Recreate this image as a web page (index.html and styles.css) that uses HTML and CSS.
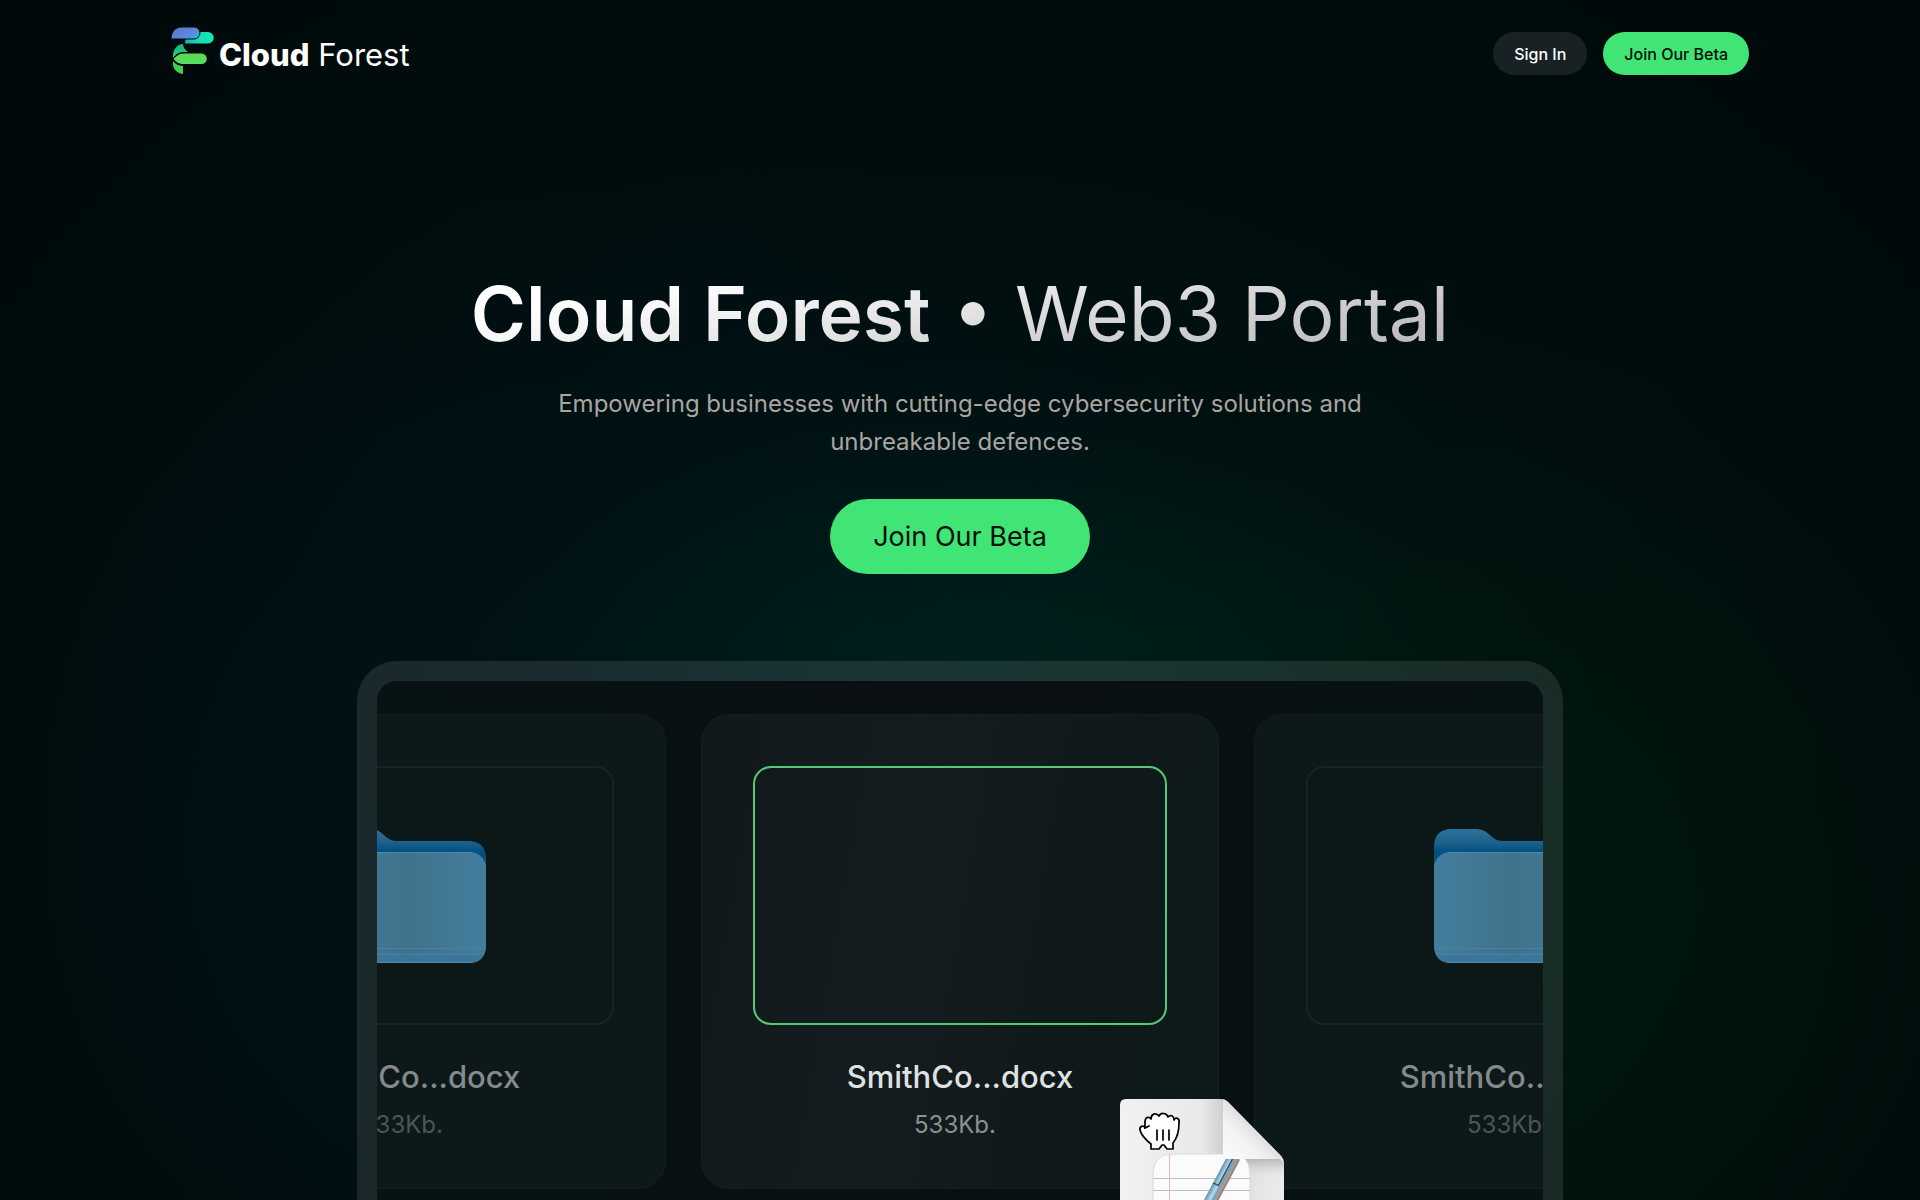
FILE: index.html
```html
<!DOCTYPE html>
<html lang="en">
<head>
<meta charset="utf-8">
<meta name="viewport" content="width=device-width, initial-scale=1">
<title>Cloud Forest</title>
<link rel="stylesheet" href="styles.css">
</head>
<body>
<div class="page">
  <header class="topbar">
    <a class="brand" href="#">
      <svg class="brand-mark" viewBox="0 0 44 48" aria-hidden="true">
        <defs>
          <linearGradient id="g-blue" x1="0" y1="0" x2="1" y2="0.6"><stop offset="0" stop-color="#5a78cc"/><stop offset="0.6" stop-color="#5f80dd"/><stop offset="1" stop-color="#4aa0dc"/></linearGradient>
          <linearGradient id="g-teal" x1="0" y1="0" x2="1" y2="0"><stop offset="0" stop-color="#18b3a6"/><stop offset="0.5" stop-color="#14dfb4"/><stop offset="1" stop-color="#14e9b4"/></linearGradient>
          <linearGradient id="g-leaf" x1="0" y1="0" x2="0" y2="1"><stop offset="0" stop-color="#10b489"/><stop offset="1" stop-color="#2ed27a"/></linearGradient>
          <linearGradient id="g-lime" x1="0" y1="0" x2="0" y2="1"><stop offset="0" stop-color="#5fd84e"/><stop offset="1" stop-color="#52e06a"/></linearGradient>
        </defs>
        <path fill="url(#g-teal)" d="M14 16.500c0-7 4-11.500 11-11.500h12a5.700 5.700 0 0 1 0 11.500z"/>
        <path fill="url(#g-blue)" stroke="#000b0c" stroke-width="1" d="M0 12C0 4 5 0 11 0h12a6 6 0 0 1 0 12z"/>
        <path fill="url(#g-leaf)" d="M2 31C1.500 23 6 17 12 17c0 3 2 6 5 8h-4c-5 0-8 2-11 6z"/>
        <path fill="url(#g-lime)" d="M2.500 32C6 28 9 26.500 13 26.500h17.500a5.300 5.300 0 0 1 0 10.600H13c-5 0-8-2-10.500-5.100z"/>
        <path fill="#46cc4e" d="M2 34c2 3 5 4.500 10 5v8C5 46 1 41 2 34z"/>
      </svg>
      <span class="brand-name"><b>Cloud</b> Forest</span>
    </a>
    <nav class="actions" aria-label="Account">
      <button class="btn btn-muted" type="button">Sign In</button>
      <button class="btn btn-accent" type="button">Join Our Beta</button>
    </nav>
  </header>

  <main class="hero">
    <h1 class="title"><strong>Cloud Forest</strong> • Web3 Portal</h1>
    <p class="lead">Empowering businesses with cutting-edge cybersecurity solutions and unbreakable defences.</p>
    <button class="btn btn-accent btn-large" type="button">Join Our Beta</button>

    <section class="frame" aria-label="File preview">
      <div class="cards">
        <article class="card card-dim">
          <div class="thumb">
            <svg class="folder" viewBox="0 0 158 134" aria-hidden="true"><use href="#folder"/></svg>
          </div>
          <h2 class="file-name">SmithCo...docx</h2>
          <p class="file-size">533Kb.</p>
        </article>

        <article class="card card-active">
          <div class="thumb"></div>
          <h2 class="file-name">SmithCo...docx</h2>
          <p class="file-size">533Kb.</p>
          <svg class="dragged" viewBox="0 0 164 214" aria-hidden="true">
            <defs>
              <linearGradient id="g-sheet" x1="0" y1="0" x2="1" y2="0"><stop offset="0" stop-color="#f1f1f1"/><stop offset="0.5" stop-color="#e9e9ea"/><stop offset="0.63" stop-color="#cfcfd0"/><stop offset="0.66" stop-color="#dcdcdd"/><stop offset="1" stop-color="#ececec"/></linearGradient>
              <linearGradient id="g-fold" x1="0" y1="1" x2="0.600" y2="0.400"><stop offset="0" stop-color="#fdfdfd"/><stop offset="0.6" stop-color="#f1f1f1"/><stop offset="1" stop-color="#d5d6d8"/></linearGradient>
              <linearGradient id="g-shade" x1="0" y1="0" x2="0" y2="1"><stop offset="0" stop-color="#9a9a9a" stop-opacity="0.600"/><stop offset="1" stop-color="#dddddd" stop-opacity="0"/></linearGradient>
              <linearGradient id="g-pen" x1="0" y1="0" x2="1" y2="0"><stop offset="0" stop-color="#5f8fb0"/><stop offset="0.4" stop-color="#b9dcf0"/><stop offset="0.62" stop-color="#6f9dbd"/><stop offset="0.78" stop-color="#b69c8c"/><stop offset="1" stop-color="#87777a"/></linearGradient>
            </defs>
            <path fill="url(#g-sheet)" d="M6 0h95q4 0 7 3l53 54q3 3 3 8v149H0V6q0-6 6-6z"/>
            <path fill="url(#g-shade)" d="M103 60h57l4 4v16h-61z"/>
            <path fill="#fbfbfb" stroke="#d9d9d9" stroke-width="1" d="M33 214V75q0-20 20-20h57q20 0 20 20v139z"/>
            <path stroke="#bdbdbd" stroke-width="1" fill="none" d="M33 79.500h97M33 91.500h97M33 103.500h97"/>
            <path stroke="#e8b9b5" stroke-width="1" d="M49.500 55v159"/>
            <g transform="translate(113 57) rotate(28)">
              <path fill="url(#g-pen)" d="M-5 0H8V140H-5z"/>
              <path fill="none" stroke="#34505f" stroke-width="1.500" d="M1 0V33H-5"/>
            </g>
            <path fill="url(#g-fold)" d="M103 0q3 1 5 3l53 54q2 2 1 3h-53q-6 0-6-6z"/>
            <g transform="translate(19 14)" stroke="#000" stroke-width="1.700" stroke-linejoin="round" stroke-linecap="round">
              <path fill="#fff" d="M12 36V31C7 27 2 21 1 17C0 13 5 12 6 15V9C6 4 10 3 12 6C12 1 17-1 20 3C22-1 28 0 29 4C32 1 35 3 35 7C37 3 41 6 40 10C40 17 39 24 34 30V36H28L25 32H23L20 36z"/>
              <path fill="none" d="M6 15L10 13M18 17V27M24 17V27M30 17V27"/>
            </g>
          </svg>
        </article>

        <article class="card card-dim">
          <div class="thumb">
            <svg class="folder" viewBox="0 0 158 134" aria-hidden="true">
              <defs>
                <linearGradient id="g-back" gradientUnits="userSpaceOnUse" x1="0" y1="0" x2="0" y2="23"><stop offset="0" stop-color="#2f729c"/><stop offset="0.5" stop-color="#20648e"/><stop offset="1" stop-color="#034f80"/></linearGradient>
                <linearGradient id="g-front" x1="0" y1="0" x2="1" y2="0"><stop offset="0" stop-color="#437e9f"/><stop offset="0.5" stop-color="#40728b"/><stop offset="1" stop-color="#437e9f"/></linearGradient>
                <g id="folder">
                  <path fill="url(#g-back)" d="M0 18Q0 0 18 0H42C56 0 56 12 69 12H140Q158 12 158 30V60H0z"/>
                  <rect fill="url(#g-front)" y="23" width="158" height="111" rx="16"/>
                  <path fill="#3b769a" d="M2 126H156Q152 134 142 134H16Q6 134 2 126z"/>
                  <path stroke="#4a819e" stroke-width="1" fill="none" d="M1 119.500H157M2 125.500H156"/>
                  <path stroke="#5189a8" stroke-width="1" fill="none" d="M14 133.500H144M14 23.500H144"/>
                </g>
              </defs>
              <use href="#folder"/>
            </svg>
          </div>
          <h2 class="file-name">SmithCo...docx</h2>
          <p class="file-size">533Kb.</p>
        </article>
      </div>
    </section>
  </main>
</div>
</body>
</html>
```
FILE: styles.css
```css
* {
  box-sizing: border-box;
}

body {
  margin: 0;
  background: #000a0b;
  color: #fff;
  font-family: Inter, "Liberation Sans", sans-serif;
}

h1, h2, p {
  margin: 0;
}

.page {
  display: flex;
  flex-direction: column;
  height: 100vh;
  overflow: hidden;
  background:
    radial-gradient(ellipse 26% 24% at 51% 57%, rgba(0, 48, 40, 0.4), transparent),
    radial-gradient(ellipse 34% 50% at 74% 76%, rgba(0, 36, 16, 0.5), transparent),
    radial-gradient(ellipse 40% 60% at 32% 70%, rgba(0, 24, 34, 0.5), transparent),
    radial-gradient(ellipse 60% 80% at 50% 65%, rgba(0, 26, 26, 0.6), transparent),
    #000a0b;
}

.topbar {
  display: flex;
  align-items: flex-end;
  justify-content: space-between;
  width: 100%;
  max-width: 1626px;
  margin: 0 auto;
  padding: 27px 24px 0;
}

.brand {
  display: flex;
  align-items: center;
  gap: 4px;
  color: #fff;
  text-decoration: none;
}

.brand-mark {
  width: 44px;
  height: 48px;
}

.brand-name {
  padding-top: 8px;
  font-size: 31px;
  line-height: 36px;
}

.brand-name b {
  font-weight: 800;
}

.actions {
  display: flex;
  gap: 16px;
}

.btn {
  height: 43px;
  padding: 0 21px;
  border: 0;
  border-radius: 40px;
  font: 500 16px/20px Inter, "Liberation Sans", sans-serif;
  white-space: nowrap;
  cursor: pointer;
}

.btn-muted {
  background: #182224;
  color: #fff;
}

.btn-accent {
  background: #41e575;
  color: #000f0a;
}

.btn-large {
  height: 75px;
  padding: 0 43px;
  font-size: 27px;
  font-weight: 400;
  line-height: 32px;
}

.hero {
  display: flex;
  flex: 1;
  flex-direction: column;
  align-items: center;
  min-height: 0;
  padding: 193px 24px 0;
}

.title {
  background: linear-gradient(170deg, #fff 20%, #b4b2b2 100%);
  background-clip: text;
  color: transparent;
  font-size: 75px;
  font-weight: 400;
  line-height: 92px;
  text-align: center;
}

.title strong {
  font-weight: 600;
}

.lead {
  max-width: 840px;
  margin-top: 25px;
  color: #aaa5a0;
  font-size: 24px;
  line-height: 38px;
  text-align: center;
}

.hero .btn-large {
  flex: none;
  margin-top: 38px;
}

.frame {
  flex: 1;
  width: 100%;
  max-width: 1206px;
  min-height: 0;
  margin-top: 87px;
  border: 20px solid rgba(255, 255, 255, 0.1);
  border-bottom: 0;
  border-radius: 40px 40px 0 0;
  background: linear-gradient(90deg, #071212, #0a0f11 50%, #071212) padding-box;
  overflow: hidden;
}

.cards {
  display: flex;
  justify-content: center;
  gap: 35px;
  padding-top: 33px;
}

.card {
  position: relative;
  flex: none;
  width: 518px;
  height: 475px;
  padding: 51px;
  border: 1px solid #122020;
  border-radius: 28px;
  background: #0d1818;
  text-align: center;
}

.card-active {
  border-color: #14201f;
  background: linear-gradient(100deg, #10191a, #151c1f 40%, #0f1919 75%, #0f1a1a);
}

.thumb {
  display: grid;
  place-items: center;
  height: 259px;
  border: 2px solid #12252a;
  border-radius: 18px;
}

.card-dim .thumb {
  background: #0c1717;
}

.card-active .thumb {
  border-color: #57c77c;
}

.folder {
  width: 158px;
  height: 134px;
}

.file-name {
  margin-top: 31px;
  font-size: 31px;
  font-weight: 500;
  line-height: 42px;
  color: #dfe1e2;
}

.file-size {
  margin-top: 11px;
  padding-right: 10px;
  color: #8a9192;
  font-size: 24px;
  line-height: 32px;
}

.card-dim .file-name {
  color: #838a8b;
}

.card-dim .file-size {
  color: #4b5556;
}

.dragged {
  position: absolute;
  z-index: 1;
  top: 384px;
  left: 418px;
  width: 164px;
  height: 214px;
}
```
